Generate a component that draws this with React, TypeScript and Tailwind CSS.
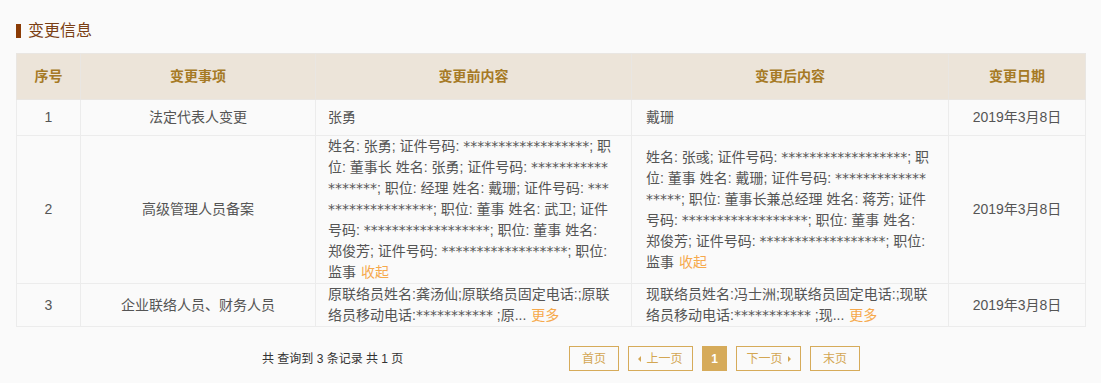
import React from 'react';

interface ChangeRow {
  id: number;
  item: string;
  before: string[];
  after: string[];
  date: string;
  action?: '收起' | '更多';
}

const rows: ChangeRow[] = [
  {
    id: 1,
    item: '法定代表人变更',
    before: ['张勇'],
    after: ['戴珊'],
    date: '2019年3月8日',
  },
  {
    id: 2,
    item: '高级管理人员备案',
    before: [
      '姓名: 张勇; 证件号码: ******************; 职',
      '位: 董事长 姓名: 张勇; 证件号码: ***********',
      '*******; 职位: 经理 姓名: 戴珊; 证件号码: ***',
      '***************; 职位: 董事 姓名: 武卫; 证件',
      '号码: ******************; 职位: 董事 姓名:',
      '郑俊芳; 证件号码: ******************; 职位:',
      '监事',
    ],
    after: [
      '姓名: 张彧; 证件号码: ******************; 职',
      '位: 董事 姓名: 戴珊; 证件号码: *************',
      '*****; 职位: 董事长兼总经理 姓名: 蒋芳; 证件',
      '号码: ******************; 职位: 董事 姓名:',
      '郑俊芳; 证件号码: ******************; 职位:',
      '监事',
    ],
    date: '2019年3月8日',
    action: '收起',
  },
  {
    id: 3,
    item: '企业联络人员、财务人员',
    before: ['原联络员姓名:龚汤仙;原联络员固定电话:;原联', '络员移动电话:*********** ;原...'],
    after: ['现联络员姓名:冯士洲;现联络员固定电话:;现联', '络员移动电话:*********** ;现...'],
    date: '2019年3月8日',
    action: '更多',
  },
];

const headers = ['序号', '变更事项', '变更前内容', '变更后内容', '变更日期'];

// masked id numbers are drawn in a wider font so the runs keep their width
const Masked: React.FC<{ text: string }> = ({ text }) => (
  <>
    {text.split(/(\*+)/).map((part, i) =>
      part.startsWith('*') ? (
        <span key={i} style={{ fontFamily: '"DejaVu Sans", sans-serif' }}>
          {part}
        </span>
      ) : (
        <React.Fragment key={i}>{part}</React.Fragment>
      )
    )}
  </>
);

const CellText: React.FC<{ lines: string[]; action?: string }> = ({ lines, action }) => (
  <div className="leading-[21px]">
    {lines.map((line, i) => (
      <div key={i} className="whitespace-nowrap">
        <Masked text={line} />
        {action && i === lines.length - 1 && <span className="ml-[5px] text-[#f6a94c]">{action}</span>}
      </div>
    ))}
  </div>
);

const PageButton: React.FC<{ children: React.ReactNode; active?: boolean; width: string }> = ({
  children,
  active,
  width,
}) => (
  <button
    type="button"
    className={`h-[25px] ${width} flex items-center justify-center gap-[5px] border border-[#d6ab5a] text-[12px] ${
      active ? 'bg-[#d6ab5a] text-white font-bold' : 'bg-transparent text-[#d3a653]'
    }`}
  >
    {children}
  </button>
);

const App: React.FC = () => {
  return (
    <div
      className="w-[1101px] h-[383px] bg-[#fafafa] px-4 pt-[20px] text-[14px] text-[#555]"
      style={{ fontFamily: '"Liberation Sans", "Noto Sans CJK SC", sans-serif' }}
    >
      <div className="flex items-center h-[22px] mb-[11px]">
        <span className="w-[5px] h-[14px] bg-[#8a3b05] mr-[7px]" />
        <span className="text-[16px] text-[#7a3f14] leading-[22px]">变更信息</span>
      </div>

      <table className="w-[1069px] table-fixed border-collapse">
        <colgroup>
          <col className="w-[64px]" />
          <col className="w-[235px]" />
          <col className="w-[316px]" />
          <col className="w-[317px]" />
          <col className="w-[137px]" />
        </colgroup>
        <thead>
          <tr className="bg-[#ece4d9] h-[46px]">
            {headers.map((h) => (
              <th key={h} className="border border-[#e9e6e2] text-center font-bold text-[#a67a25] text-[14px]">
                {h}
              </th>
            ))}
          </tr>
        </thead>
        <tbody>
          {rows.map((row) => (
            <tr key={row.id} className="h-[36px]">
              <td className="border border-[#ececec] text-center">{row.id}</td>
              <td className="border border-[#ececec] text-center">{row.item}</td>
              <td className="border border-[#ececec] px-3 align-top">
                <div className="min-h-[35px] flex items-center">
                  <CellText lines={row.before} action={row.action} />
                </div>
              </td>
              <td className="border border-[#ececec] px-[14px]">
                <CellText lines={row.after} action={row.action} />
              </td>
              <td className="border border-[#ececec] text-center">{row.date}</td>
            </tr>
          ))}
        </tbody>
      </table>

      <div className="flex items-center mt-[19px] text-[12px] text-[#333]">
        <div className="ml-[246px] w-[307px]">共 查询到 3 条记录 共 1 页</div>
        <div className="flex items-center gap-[9px]">
          <PageButton width="w-[50px]">首页</PageButton>
          <PageButton width="w-[65px]">
            <span className="w-0 h-0 border-y-[3px] border-y-transparent border-r-[3px] border-r-[#d3a653]" />
            上一页
          </PageButton>
          <PageButton width="w-[25px]" active>
            1
          </PageButton>
          <PageButton width="w-[65px]">
            下一页
            <span className="w-0 h-0 border-y-[3px] border-y-transparent border-l-[3px] border-l-[#d3a653]" />
          </PageButton>
          <PageButton width="w-[50px]">末页</PageButton>
        </div>
      </div>
    </div>
  );
};

export default App;
